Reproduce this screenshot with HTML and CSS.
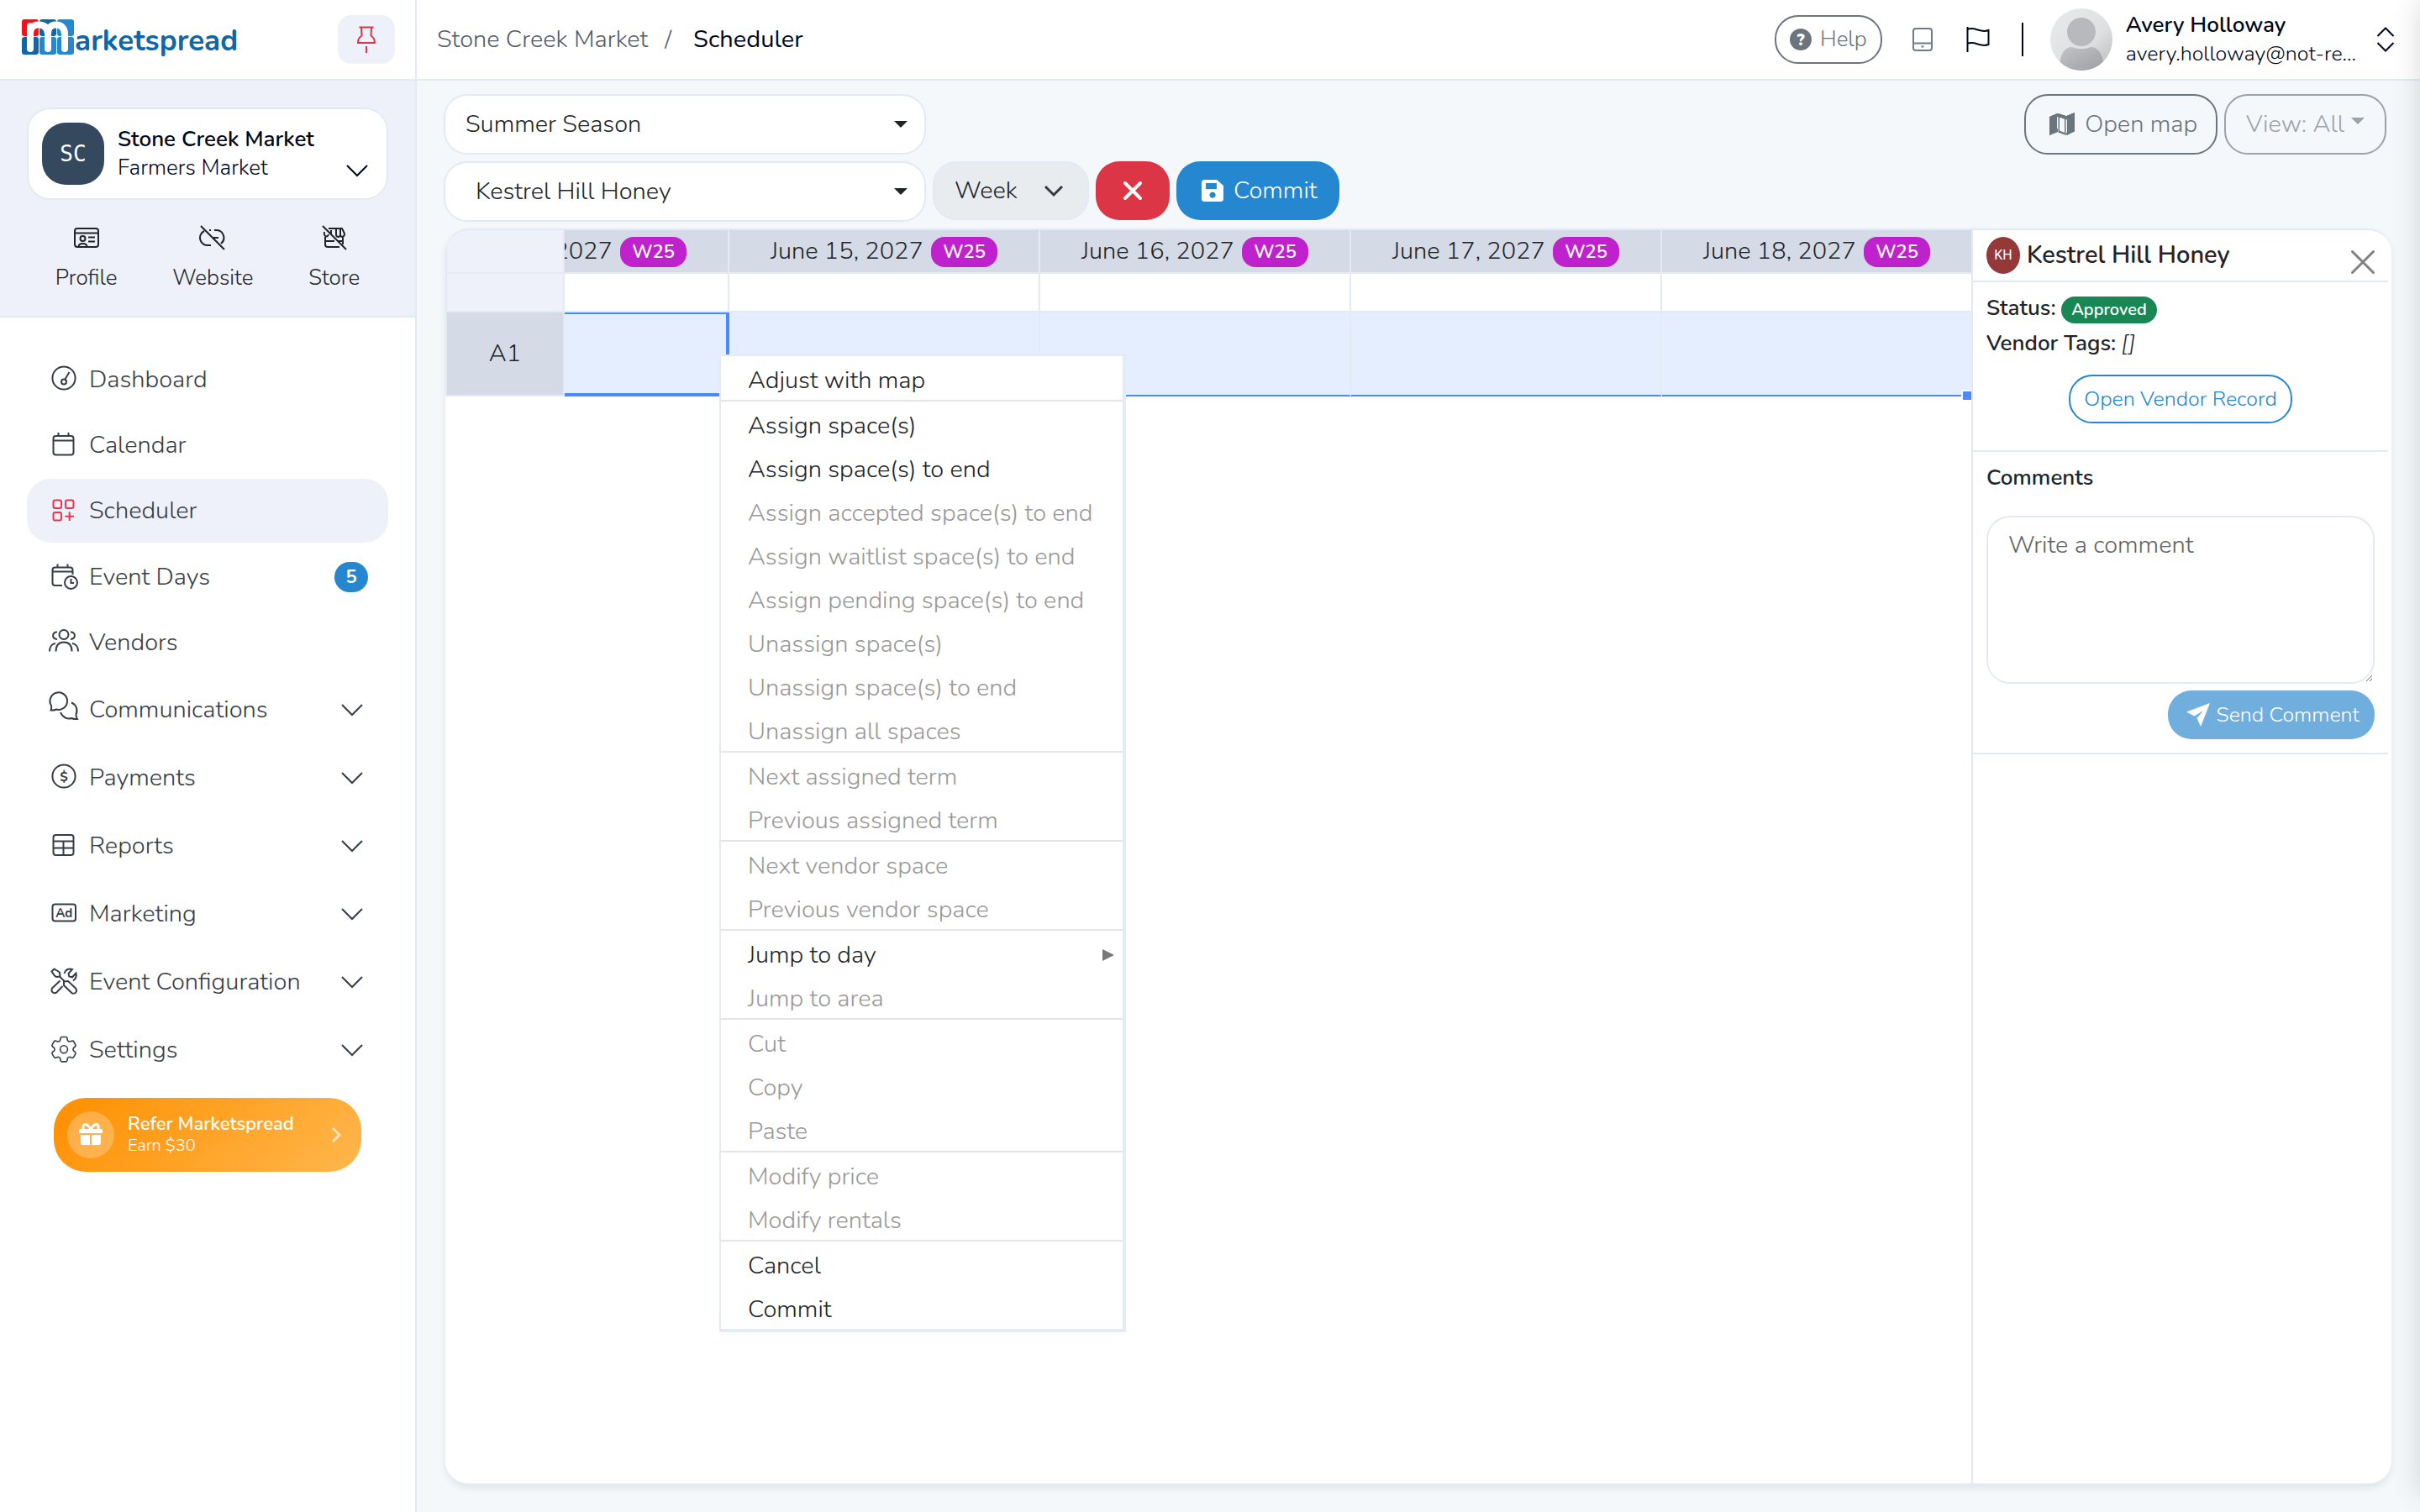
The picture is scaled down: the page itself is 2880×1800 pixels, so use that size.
FILE: index.html
```html
<!DOCTYPE html>
<html lang="en">
<head>
  <meta charset="utf-8">
  <title>Scheduler - Marketspread</title>
  <link rel="stylesheet" href="styles.css">
</head>
<body>
  <aside class="sidebar">
    <div class="brand-bar">
      <a class="brand" href="#">
        <svg class="brand-mark" width="62" height="42" viewBox="0 0 62 42" aria-hidden="true">
          <rect x="0" y="0" width="20" height="20" rx="3" fill="#fb0f14"/>
          <rect x="21" y="0" width="20" height="20" rx="3" fill="#0f67a6"/>
          <rect x="42" y="0" width="20" height="20" rx="3" fill="#2487d0"/>
          <rect x="0" y="21" width="20" height="21" rx="3" fill="#0f67a6"/>
          <rect x="21" y="21" width="20" height="21" rx="3" fill="#2487d0"/>
          <rect x="42" y="21" width="20" height="21" rx="3" fill="#2487d0"/>
          <path d="M10 8v27M10 17c0-7 4-10.500 9-10.500h1c7 0 10.500 3.500 11 10.500v18M31 17c0-7 4-10.500 9-10.500 8 0 11 4.500 11 11v17.500" fill="none" stroke="#fff" stroke-width="8" stroke-linecap="round"/>
        </svg>
        <span class="brand-text">arketspread</span>
      </a>
      <button class="pin-btn" aria-label="Pin menu">
        <svg width="24" height="32" viewBox="0 0 24 32"><path d="M3.500 1.500h17M6 1.500l.5 10c-2.500 1.500-4.500 4-4.500 8.500h20c0-4.500-2-7-4.500-8.500l.5-10M12 24v8"/></svg>
      </button>
    </div>

    <div class="market">
      <button class="market-card">
        <span class="market-avatar">SC</span>
        <span class="market-names">
          <span class="market-name">Stone Creek Market</span>
          <span class="market-type">Farmers Market</span>
        </span>
        <svg class="chevron" width="26" height="14" viewBox="0 0 26 14"><path d="M1 1l12 12L25 1"/></svg>
      </button>
      <div class="quick-links">
        <a href="#">
          <svg width="30" height="30" viewBox="0 0 30 30"><rect x="1" y="4" width="28" height="22" rx="3"/><path d="M1 9.500h28M17 14.500h8M17 19.500h8M5.500 26c0-3 2-4 5-4s5 1 5 4"/><circle cx="10.500" cy="16" r="3"/></svg>
          Profile
        </a>
        <a href="#">
          <svg width="30" height="30" viewBox="0 0 30 30"><path d="M1 1l28 28M5 7a9 9 0 0 0 5 17h3M13 6h-2M17 6h3a9 9 0 0 1 5 16M16 15h6"/></svg>
          Website
        </a>
        <a href="#">
          <svg width="30" height="30" viewBox="0 0 30 30"><path d="M1 1l28 28M8 4h16l3 6c0 5-5 5-5 1 0 4-5 4-5 0V4M22 4v8M11 6v5M3 8c-1 6 4 7 5 3M4 14v9q0 3 3 3h14M25 14v9M4 19h11M19 19h6"/></svg>
          Store
        </a>
      </div>
    </div>

    <nav class="nav">
      <a class="nav-item" href="#">
        <svg width="36" height="36" viewBox="0 0 36 36"><circle cx="18" cy="16" r="13.600"/><circle cx="18" cy="20.500" r="3"/><path d="M19.500 17.500l5-8.500"/></svg>
        Dashboard
      </a>
      <a class="nav-item" href="#">
        <svg width="36" height="36" viewBox="0 0 36 36"><rect x="5.500" y="7" width="24" height="22.500" rx="3"/><path d="M5.500 12.500h24M11.500 3v4M23.500 3v4"/></svg>
        Calendar
      </a>
      <a class="nav-item active" href="#">
        <svg width="36" height="36" viewBox="0 0 36 36"><rect x="5.500" y="5.500" width="9.500" height="9.500" rx="2"/><rect x="20" y="5.500" width="9.500" height="9.500" rx="2"/><rect x="5.500" y="20" width="9.500" height="9.500" rx="2"/><path d="M24.700 19.500v10.500M19.500 24.700h10.500"/></svg>
        Scheduler
      </a>
      <a class="nav-item with-badge" href="#">
        <svg width="36" height="36" viewBox="0 0 36 36"><path d="M28.500 15V9.500q0-3-3-3h-18q-3 0-3 3v15.500q0 3 3 3h8.500M4.500 11.500h24M10.500 2.500v4M22.500 2.500v4"/><circle cx="26.500" cy="24.500" r="7.500"/><path d="M26.500 20v5h3.500"/></svg>
        Event Days
        <span class="count-badge">5</span>
      </a>
      <a class="nav-item" href="#">
        <svg width="36" height="36" viewBox="0 0 36 36"><circle cx="18" cy="8.500" r="5.500"/><path d="M8.500 28.500c0-6.500 3-11 9.500-11s9.500 4.500 9.500 11M10 5.500c-6-1-7 8.500 0 8.500M26 5.500c6-1 7 8.500 0 8.500M1 28.500c0-5 2.500-9 7-9.500M35 28.500c0-5-2.500-9-7-9.500"/></svg>
        Vendors
      </a>
      <button class="nav-item toggle">
        <svg width="36" height="36" viewBox="0 0 36 36"><path d="M2.500 18.500c1-2 1-3.500.5-5.500A10.300 10.300 0 1 1 9 17.500c-2 1-4 1.300-6.500 1zM27 9.500a10.200 10.200 0 0 1 5.500 14c-.3 2 .2 3.500 1.500 5.500-2.500.3-4.500 0-6.500-1-5 1.500-11-.5-13.500-7"/></svg>
        Communications
        <svg class="chevron" width="26" height="14" viewBox="0 0 26 14"><path d="M1 1l12 12L25 1"/></svg>
      </button>
      <button class="nav-item toggle">
        <svg width="36" height="36" viewBox="0 0 36 36"><circle cx="18" cy="16" r="13.600"/><text x="18" y="21.500" font-size="16" text-anchor="middle">$</text></svg>
        Payments
        <svg class="chevron" width="26" height="14" viewBox="0 0 26 14"><path d="M1 1l12 12L25 1"/></svg>
      </button>
      <button class="nav-item toggle">
        <svg width="36" height="36" viewBox="0 0 36 36"><rect x="5.500" y="5" width="24" height="24" rx="3"/><path d="M5.500 12.500h24M5.500 20.500h24M17.500 12.500V29"/></svg>
        Reports
        <svg class="chevron" width="26" height="14" viewBox="0 0 26 14"><path d="M1 1l12 12L25 1"/></svg>
      </button>
      <button class="nav-item toggle">
        <svg width="36" height="36" viewBox="0 0 36 36"><rect x="4.500" y="6.500" width="27.500" height="20" rx="3"/><text x="18.300" y="22" font-size="15" text-anchor="middle">Ad</text></svg>
        Marketing
        <svg class="chevron" width="26" height="14" viewBox="0 0 26 14"><path d="M1 1l12 12L25 1"/></svg>
      </button>
      <button class="nav-item toggle">
        <svg width="36" height="36" viewBox="0 0 36 36"><path d="M3.500 5.500l3-3L13 6.500l.5 5-4.500.5-2-1.500zM12.500 11l6 6M18 17.500l5-.5 9 8.500a3.600 3.600 0 0 1-5 5.200l-9-8.700zM18.500 8c1-4.500 5-6.500 9.500-5l-4.500 5 .8 3.500 3.700.8L32.500 7.500c1 4-.5 7-3.500 9M13.500 16.500L4.500 25a3.600 3.600 0 0 0 5 5.200l7-7.200"/></svg>
        Event Configuration
        <svg class="chevron" width="26" height="14" viewBox="0 0 26 14"><path d="M1 1l12 12L25 1"/></svg>
      </button>
      <button class="nav-item toggle">
        <svg class="gear" width="36" height="36" viewBox="1 1.500 22 22"><path d="M9.594 3.940c.09-.542.56-.94 1.110-.94h2.593c.55 0 1.020.398 1.110.94l.213 1.281c.063.374.313.686.645.87.074.04.147.083.22.127.325.196.72.257 1.075.124l1.217-.456a1.125 1.125 0 0 1 1.370.49l1.296 2.247a1.125 1.125 0 0 1-.26 1.431l-1.003.827c-.293.241-.438.613-.43.992a7.723 7.723 0 0 1 0 .255c-.008.378.137.75.43.991l1.004.827c.424.35.534.955.26 1.430l-1.298 2.247a1.125 1.125 0 0 1-1.369.491l-1.217-.456c-.355-.133-.75-.072-1.076.124a6.470 6.470 0 0 1-.22.128c-.331.183-.581.495-.644.869l-.213 1.281c-.09.543-.56.94-1.110.94h-2.594c-.55 0-1.019-.398-1.110-.94l-.213-1.281c-.062-.374-.312-.686-.644-.87a6.520 6.520 0 0 1-.22-.127c-.325-.196-.72-.257-1.076-.124l-1.217.456a1.125 1.125 0 0 1-1.369-.49l-1.297-2.247a1.125 1.125 0 0 1 .26-1.431l1.004-.827c.292-.24.437-.613.43-.991a6.932 6.932 0 0 1 0-.255c.007-.38-.138-.751-.43-.992l-1.004-.827a1.125 1.125 0 0 1-.26-1.430l1.297-2.247a1.125 1.125 0 0 1 1.370-.491l1.216.456c.356.133.751.072 1.076-.124.072-.044.146-.086.22-.128.332-.183.582-.495.644-.869l.214-1.280Z"/><circle cx="12" cy="12" r="2.700"/></svg>
        Settings
        <svg class="chevron" width="26" height="14" viewBox="0 0 26 14"><path d="M1 1l12 12L25 1"/></svg>
      </button>
    </nav>

    <a class="refer" href="#">
      <span class="refer-icon">
        <svg width="28" height="28" viewBox="0 0 28 28"><path d="M2 14h11v12H4.500q-2.500 0-2.500-2.500zM15 14h11v9.500q0 2.500-2.500 2.500H15zM1.500 7h25q1.500 0 1.500 1.500v3.500H0V8.500Q0 7 1.500 7z" fill="#fff"/><path d="M14 8C12 3.500 10 1.500 7.500 1.500S4.500 5 5 7.500M14 8c2-4.500 4-6.500 6.500-6.500s3 3.500 2.500 6" fill="none" stroke="#fff" stroke-width="3"/></svg>
      </span>
      <span class="refer-text">
        <strong>Refer Marketspread</strong>
        <span>Earn $30</span>
      </span>
      <svg class="refer-arrow" width="12" height="20" viewBox="0 0 12 20"><path d="M2 2l8 8-8 8"/></svg>
    </a>
  </aside>

  <div class="page">
    <header class="topbar">
      <nav class="breadcrumb">
        <a href="#">Stone Creek Market</a>
        <span class="slash">/</span>
        <span class="current">Scheduler</span>
      </nav>
      <div class="topbar-right">
        <button class="help-btn">
          <svg width="26" height="26" viewBox="0 0 26 26"><circle cx="13" cy="13" r="13" fill="#6c757d"/><text x="13" y="20" font-size="19" font-weight="900" text-anchor="middle" fill="#fff">?</text></svg>
          Help
        </button>
        <svg class="device" width="24" height="28" viewBox="0 0 24 28"><rect x="1" y="1" width="22" height="26" rx="3"/><path d="M1 18.500h22M10.500 22.500h3"/></svg>
        <svg class="flag" width="28" height="30" viewBox="0 0 28 30"><path d="M1.500 0v30M1.500 3c9-4 15 5 25 1v17c-10 4-16-5-25-1"/></svg>
        <span class="divider"></span>
        <button class="user">
          <svg width="74" height="74" viewBox="0 0 74 74">
            <defs>
              <linearGradient id="ring" x1="0" y1="0" x2="1" y2="1"><stop offset="0" stop-color="#e9eaeb"/><stop offset=".6" stop-color="#dfe0e1"/><stop offset="1" stop-color="#b9babc"/></linearGradient>
              <linearGradient id="bust" x1="0" y1="0" x2="1" y2="1"><stop offset="0" stop-color="#c3c4c7"/><stop offset="1" stop-color="#9d9ea1"/></linearGradient>
              <clipPath id="round"><circle cx="37" cy="37" r="37"/></clipPath>
            </defs>
            <circle cx="37" cy="37" r="37" fill="url(#ring)"/>
            <path clip-path="url(#round)" d="M11 74c0-16 4-28 15-28 7 3 15 3 22 0 11 0 16 12 16 28z" fill="url(#bust)"/>
            <circle cx="37" cy="28" r="17" fill="#b8b9bc"/>
          </svg>
          <span class="user-text">
            <strong>Avery Holloway</strong>
            <span>avery.holloway@not-re...</span>
          </span>
          <svg class="updown" width="22" height="30" viewBox="0 0 22 30"><path d="M1.500 11L11 1.500 20.500 11M1.500 19l9.500 9.500L20.500 19"/></svg>
        </button>
      </div>
    </header>

    <main class="content">
      <div class="toolbar">
        <div class="toolbar-row">
          <div class="select-wrap wide">
            <select aria-label="Season"><option>Summer Season</option></select>
            <svg class="caret" width="16" height="8" viewBox="0 0 16 8"><path d="M0 0h16L8 8z"/></svg>
          </div>
          <div class="toolbar-end">
            <button class="btn outline">
              <svg width="30" height="28" viewBox="0 0 30 28"><path d="M0 5l9-4v22l-9 4zM10.500 1l9 3v23l-9-3.500zM21 4l9-4v22l-9 5z" fill="#6c757d"/><path d="M12 4l6 2v18l-6-2.500z" fill="#f4f8fb"/><path d="M0 5l10-4 10 3 10-4v4l-10 4.500L10 5 0 8zM0 23l10-4v4L0 27zM20 24l10-4v2.500L20 27z" fill="#6c757d"/></svg>
              Open map
            </button>
            <button class="btn outline faded">
              View: All
              <svg class="view-caret" width="16" height="8" viewBox="0 0 16 8"><path d="M0 0h16L8 8z"/></svg>
            </button>
          </div>
        </div>
        <div class="toolbar-row">
          <div class="select-wrap wide indent">
            <select aria-label="Vendor"><option>Kestrel Hill Honey</option></select>
            <svg class="caret" width="16" height="8" viewBox="0 0 16 8"><path d="M0 0h16L8 8z"/></svg>
          </div>
          <div class="select-wrap week">
            <select aria-label="View range"><option>Week</option></select>
            <svg class="caret line" width="24" height="14" viewBox="0 0 24 14"><path d="M2 2l10 10L22 2"/></svg>
          </div>
          <button class="btn danger" aria-label="Discard">
            <svg width="22" height="22" viewBox="0 0 22 22"><path d="M2 2l18 18M20 2L2 20" stroke="#fff" stroke-width="4" stroke-linecap="round"/></svg>
          </button>
          <button class="btn primary">
            <svg width="26" height="26" viewBox="0 0 26 26"><path fill-rule="evenodd" d="M3.500 0H18l8 7v15.500q0 3.500-3.500 3.500h-19Q0 26 0 22.500v-19Q0 0 3.500 0zM5 4v7h13V4zM13 14.500a3.600 3.600 0 1 0 .1 0z" fill="#fff"/></svg>
            Commit
          </button>
        </div>
      </div>

      <section class="board">
        <div class="grid">
          <table class="schedule">
            <thead>
              <tr>
                <th class="corner"></th>
                <th>June 14, 2027 <span class="week-badge">W25</span></th>
                <th>June 15, 2027 <span class="week-badge">W25</span></th>
                <th>June 16, 2027 <span class="week-badge">W25</span></th>
                <th>June 17, 2027 <span class="week-badge">W25</span></th>
                <th>June 18, 2027 <span class="week-badge">W25</span></th>
              </tr>
            </thead>
            <tbody>
              <tr class="spacer"><th class="corner"></th><td></td><td></td><td></td><td></td><td></td></tr>
              <tr class="selected">
                <th scope="row">A1</th>
                <td class="current-cell"></td><td></td><td></td><td></td>
                <td><span class="fill-handle"></span></td>
              </tr>
            </tbody>
          </table>
        </div>

        <aside class="details">
          <div class="details-head">
            <span class="vendor-avatar">KH</span>
            <h2>Kestrel Hill Honey</h2>
            <button class="close-btn" aria-label="Close">
              <svg width="28" height="28" viewBox="0 0 28 28"><path d="M1.500 1.500l25 25M26.500 1.500l-25 25"/></svg>
            </button>
          </div>
          <div class="details-section status">
            <p><strong>Status:</strong> <span class="status-badge">Approved</span></p>
            <p><strong>Vendor Tags:</strong> <em>[]</em></p>
            <button class="small-btn">Open Vendor Record</button>
          </div>
          <div class="details-section comments">
            <label for="comment">Comments</label>
            <textarea id="comment" placeholder="Write a comment"></textarea>
            <button class="small-btn send">
              <svg width="28" height="28" viewBox="0 0 28 28"><path d="M28 0L0 10.500l9.500 5L20 9 12.500 18l4.500 10z" fill="#fff"/></svg>
              Send Comment
            </button>
          </div>
        </aside>

        <ul class="context-menu">
          <li><button>Adjust with map</button></li>
          <li class="sep"><button>Assign space(s)</button></li>
          <li><button>Assign space(s) to end</button></li>
          <li><button disabled>Assign accepted space(s) to end</button></li>
          <li><button disabled>Assign waitlist space(s) to end</button></li>
          <li><button disabled>Assign pending space(s) to end</button></li>
          <li><button disabled>Unassign space(s)</button></li>
          <li><button disabled>Unassign space(s) to end</button></li>
          <li><button disabled>Unassign all spaces</button></li>
          <li class="sep"><button disabled>Next assigned term</button></li>
          <li><button disabled>Previous assigned term</button></li>
          <li class="sep"><button disabled>Next vendor space</button></li>
          <li><button disabled>Previous vendor space</button></li>
          <li class="sep"><button>Jump to day <svg width="14" height="14" viewBox="0 0 14 14"><path d="M0 0l14 7-14 7z" fill="#777"/></svg></button></li>
          <li><button disabled>Jump to area</button></li>
          <li class="sep"><button disabled>Cut</button></li>
          <li><button disabled>Copy</button></li>
          <li><button disabled>Paste</button></li>
          <li class="sep"><button disabled>Modify price</button></li>
          <li><button disabled>Modify rentals</button></li>
          <li class="sep"><button>Cancel</button></li>
          <li><button>Commit</button></li>
        </ul>
      </section>
    </main>
  </div>

  <div class="drawer"></div>
</body>
</html>
```
FILE: styles.css
```css
:root {
  --border: #e4eaf5;
  --soft-bg: #eef1f9;
  --page-bg: #f4f8fb;
  --head-bg: #d4dae6;
  --text: #212529;
  --ink: #00081d;
  --nav-text: #363d47;
  --muted: #6c757d;
  --primary: #2487d0;
  --danger: #dc3545;
  --select-blue: #4b89ff;
}

* {
  box-sizing: border-box;
}

body {
  margin: 0;
  display: flex;
  height: 100vh;
  overflow: hidden;
  font-family: Nunito, "Open Sans", sans-serif;
  font-weight: 300;
  font-size: 29px;
  line-height: 42px;
  color: var(--text);
  background: var(--page-bg);
}

button, select, textarea {
  font: inherit;
  color: inherit;
}

button {
  padding: 0;
  border: 0;
  background: none;
  cursor: pointer;
}

a {
  color: inherit;
  text-decoration: none;
}

svg {
  flex-shrink: 0;
  overflow: visible;
}

strong {
  font-weight: 600;
}

/* Sidebar */
.sidebar {
  flex: 0 0 496px;
  background: #fff;
  border-right: 2px solid var(--border);
}

.brand-bar {
  display: flex;
  align-items: center;
  justify-content: space-between;
  height: 96px;
  padding: 0 24px 0 26px;
  border-bottom: 2px solid var(--border);
}

.brand {
  display: flex;
  align-items: center;
  gap: 1px;
}

.brand-mark {
  margin-bottom: 6px;
}

.brand-text {
  margin-top: 4px;
  font-size: 35px;
  font-weight: 700;
  color: #0f67a6;
}

.pin-btn {
  display: flex;
  align-items: center;
  justify-content: center;
  width: 68px;
  height: 58px;
  border-radius: 16px;
  background: var(--soft-bg);
}

.pin-btn svg {
  fill: none;
  stroke: var(--danger);
  stroke-width: 2;
}

.market {
  padding: 32px 32px 24px;
  background: var(--soft-bg);
  border-bottom: 2px solid var(--border);
}

.market-card {
  display: flex;
  align-items: center;
  width: 100%;
  height: 110px;
  padding: 0 22px 0 16px;
  background: #fff;
  border: 2px solid var(--border);
  border-radius: 28px;
  text-align: left;
  color: var(--ink);
}

.market-avatar {
  display: flex;
  align-items: center;
  justify-content: center;
  width: 74px;
  height: 74px;
  margin-right: 16px;
  border-radius: 28px;
  background: #34495e;
  color: #fff;
  font-family: "DejaVu Sans Mono", monospace;
  font-size: 26px;
}

.market-names {
  display: flex;
  flex-direction: column;
  flex: 1;
  font-size: 26px;
  line-height: 34px;
}

.market-name {
  font-weight: 600;
}

.market-card .chevron {
  align-self: flex-end;
  margin-bottom: 26px;
}

.chevron {
  fill: none;
  stroke: currentColor;
  stroke-width: 2;
}

.quick-links {
  display: flex;
  justify-content: space-evenly;
  margin: 0 -32px;
  padding-top: 30px;
}

.quick-links a {
  display: flex;
  flex-direction: column;
  align-items: center;
  gap: 12px;
  font-size: 26px;
}

.quick-links svg,
.nav-item svg {
  fill: none;
  stroke: currentColor;
  stroke-width: 2;
}

.nav {
  display: flex;
  flex-direction: column;
  gap: 2px;
  padding: 36px 32px 0;
}

.nav-item {
  display: flex;
  align-items: center;
  gap: 12px;
  height: 76px;
  padding: 0 26px;
  border-radius: 28px;
  color: var(--nav-text);
  text-align: left;
}

.nav-item text {
  fill: currentColor;
  stroke: none;
  font-weight: 700;
}

.nav-item.active {
  background: var(--soft-bg);
}

.nav-item.active svg {
  stroke: #e8354a;
}

.nav-item.with-badge {
  height: 77px;
}

.nav-item.toggle {
  height: 79px;
}

.nav-item .gear {
  stroke-width: 1;
}

.nav-item .chevron {
  margin-left: auto;
  margin-right: 4px;
}

.count-badge {
  margin-left: auto;
  margin-right: -2px;
  width: 40px;
  border-radius: 18px;
  background: var(--primary);
  color: #fff;
  font-size: 22px;
  font-weight: 700;
  line-height: 36px;
  text-align: center;
}

.refer {
  display: flex;
  align-items: center;
  height: 88px;
  margin: 18px 64px 0;
  padding: 0 24px 0 16px;
  border-radius: 38px;
  background: linear-gradient(135deg, #ff8f00, #ffb74d);
  color: #fff;
}

.refer-icon {
  display: flex;
  align-items: center;
  justify-content: center;
  width: 56px;
  height: 56px;
  margin-right: 16px;
  border-radius: 50%;
  background: rgba(255, 255, 255, 0.25);
}

.refer-text {
  display: flex;
  flex-direction: column;
  flex: 1;
  font-size: 20px;
  line-height: 26px;
}

.refer-text strong {
  font-size: 22px;
}

.refer-arrow {
  fill: none;
  stroke: #ffe3bd;
  stroke-width: 3;
}

/* Top bar */
.page {
  display: flex;
  flex-direction: column;
  flex: 1;
  min-width: 0;
}

.topbar {
  display: flex;
  align-items: center;
  justify-content: space-between;
  flex: 0 0 96px;
  padding: 0 30px 0 24px;
  background: #fff;
  border-bottom: 2px solid var(--border);
}

.breadcrumb {
  display: flex;
  color: #555c66;
}

.slash {
  margin: 0 26px 0 20px;
}

.breadcrumb .current {
  color: var(--ink);
  font-weight: 400;
}

.topbar-right {
  display: flex;
  align-items: center;
}

.help-btn {
  display: flex;
  align-items: center;
  gap: 10px;
  height: 58px;
  padding: 0 16px;
  border: 2px solid var(--muted);
  border-radius: 28px;
  color: var(--muted);
  font-size: 26px;
}

.device {
  margin: 0 40px 0 36px;
  fill: none;
  stroke: #6f7a88;
  stroke-width: 2;
}

.flag {
  fill: none;
  stroke: var(--ink);
  stroke-width: 2;
}

.divider {
  width: 2px;
  height: 40px;
  margin: 0 32px 0 38px;
  background: var(--ink);
}

.user {
  display: flex;
  align-items: center;
  gap: 16px;
  color: var(--ink);
  text-align: left;
}

.user-text {
  display: flex;
  flex-direction: column;
  font-size: 25px;
  line-height: 34px;
}

.user-text strong {
  font-size: 26px;
}

.updown {
  margin-left: 8px;
  fill: none;
  stroke: currentColor;
  stroke-width: 2;
}

/* Toolbar */
.content {
  display: flex;
  flex-direction: column;
  flex: 1;
  min-height: 0;
  padding: 16px 34px 32px;
}

.toolbar {
  display: flex;
  flex-direction: column;
  gap: 8px;
  margin: 0 6px 8px -2px;
}

.toolbar-row {
  display: flex;
  align-items: flex-start;
  gap: 8px;
}

.toolbar-end {
  display: flex;
  gap: 8px;
  margin-left: auto;
}

.select-wrap {
  position: relative;
}

.select-wrap select {
  appearance: none;
  width: 100%;
  height: 72px;
  padding: 0 24px;
  border: 2px solid var(--border);
  border-radius: 28px;
  background: #fff;
}

.select-wrap.wide {
  width: 574px;
}

.select-wrap.indent select {
  padding-left: 36px;
}

.select-wrap.week {
  width: 186px;
}

.select-wrap.week select {
  height: 70px;
  background: #e9ecef;
}

.caret {
  position: absolute;
  right: 22px;
  top: 32px;
  fill: var(--text);
  pointer-events: none;
}

.caret.line {
  right: 30px;
  top: 28px;
  fill: none;
  stroke: #343a40;
  stroke-width: 3;
}

.btn {
  display: flex;
  align-items: center;
  justify-content: center;
  gap: 12px;
  height: 70px;
  padding: 0 26px 0 30px;
  border-radius: 28px;
  color: #fff;
}

.btn.danger {
  width: 88px;
  padding: 0;
  background: var(--danger);
}

.btn.primary {
  background: var(--primary);
}

.btn.outline {
  height: 72px;
  padding: 0 22px 0 28px;
  border: 2px solid var(--muted);
  color: var(--muted);
}

.btn.outline.faded {
  gap: 8px;
  padding: 0 24px;
  opacity: 0.65;
}

.view-caret {
  margin-bottom: 8px;
  fill: currentColor;
}

/* Schedule board */
.board {
  position: relative;
  display: flex;
  flex: 1;
  min-height: 0;
  overflow: hidden;
  background: #fff;
  border-top: 2px solid var(--border);
  border-bottom: 2px solid var(--border);
  border-radius: 28px;
  box-shadow: 0 4px 8px rgba(0, 0, 0, 0.075);
}

/* scrolled to the newest day, row headers stay in view */
.grid {
  display: flex;
  justify-content: flex-end;
  align-items: flex-start;
  flex: 1;
  min-width: 0;
  overflow: hidden;
}

.schedule {
  flex-shrink: 0;
  width: 1990px;
  table-layout: fixed;
  border-collapse: separate;
  border-spacing: 0;
}

.schedule th,
.schedule td {
  position: relative;
  padding: 0;
  border-right: 2px solid var(--border);
  border-bottom: 2px solid var(--border);
  font-weight: 300;
  text-align: center;
  vertical-align: middle;
}

.schedule thead th {
  width: 370px;
  height: 52px;
  background: var(--head-bg);
  white-space: nowrap;
}

.schedule tr > :last-child {
  width: 368px;
  border-right: 0;
}

.schedule tr > :first-child {
  position: sticky;
  left: 0;
  z-index: 1;
  width: 142px;
  border-left: 2px solid var(--border);
  background: var(--head-bg);
}

.schedule tr > .corner {
  background: var(--soft-bg);
}

.spacer td {
  height: 46px;
}

.selected td {
  height: 100px;
  background: #e5eefe;
  border-bottom-color: var(--select-blue);
}

.selected .current-cell {
  border-right-color: var(--select-blue);
  box-shadow: inset -2px -2px 0 var(--select-blue), inset 0 2px 0 var(--select-blue);
}

.week-badge {
  display: inline-block;
  margin-left: 2px;
  padding: 0 14px;
  border-radius: 16px;
  background: #bf22cc;
  color: #fff;
  font-size: 22px;
  font-weight: 600;
  line-height: 36px;
  vertical-align: 1px;
}

.fill-handle {
  position: absolute;
  right: 0;
  bottom: -8px;
  width: 12px;
  height: 14px;
  border: 2px solid #fff;
  border-right: 0;
  background: var(--select-blue);
}

/* Vendor details */
.details {
  flex: 0 0 500px;
  padding-right: 4px;
  border-left: 2px solid var(--border);
}

.details-head {
  display: flex;
  align-items: center;
  height: 62px;
  padding: 0 16px;
  border-bottom: 2px solid var(--border);
}

.vendor-avatar {
  width: 40px;
  margin-right: 8px;
  border-radius: 50%;
  background: #943838;
  color: #fff;
  font-family: Roboto, sans-serif;
  font-size: 16px;
  font-weight: 400;
  line-height: 44px;
  text-align: center;
}

.details-head h2 {
  flex: 1;
  margin: 0;
  font-size: 29px;
  font-weight: 600;
}

.close-btn {
  display: flex;
  padding-top: 16px;
}

.close-btn svg {
  stroke: #808080;
  stroke-width: 3;
  stroke-linecap: round;
}

.details-section {
  display: flex;
  flex-direction: column;
  padding: 10px 16px 16px;
  border-bottom: 2px solid var(--border);
  font-size: 26px;
}

.details-section p {
  margin: 0;
}

.details-section.status {
  padding-bottom: 32px;
}

.status-badge {
  display: inline-block;
  padding: 0 12px;
  border-radius: 16px;
  background: #198754;
  color: #fff;
  font-size: 20px;
  font-weight: 600;
  line-height: 32px;
}

.small-btn {
  display: flex;
  align-items: center;
  align-self: center;
  gap: 8px;
  height: 58px;
  margin-top: 16px;
  padding: 0 16px;
  border: 2px solid var(--primary);
  border-radius: 28px;
  color: var(--primary);
  font-size: 25px;
}

.comments label {
  font-weight: 600;
}

.comments textarea {
  height: 200px;
  margin-top: 24px;
  padding: 12px 24px;
  border: 2px solid var(--border);
  border-radius: 28px;
  font-size: 29px;
  resize: vertical;
}

.comments textarea::placeholder {
  color: #5f6468;
}

.small-btn.send {
  align-self: flex-end;
  margin-top: 8px;
  padding: 0 18px 0 22px;
  border: 0;
  background: #70aede;
  color: #fff;
}

/* Context menu */
.context-menu {
  position: absolute;
  left: 326px;
  top: 148px;
  z-index: 2;
  width: 484px;
  margin: 0;
  padding: 0;
  list-style: none;
  background: #fff;
  border: 2px solid #e4ebf5;
  border-right-width: 4px;
  border-bottom-width: 4px;
}

.context-menu .sep {
  border-top: 2px solid #e6e6e6;
}

.context-menu button {
  display: flex;
  align-items: center;
  justify-content: space-between;
  width: 100%;
  height: 52px;
  padding: 6px 10px 0 32px;
}

.context-menu button:disabled {
  color: #999;
}

/* off-canvas drawer parked past the right edge */
.drawer {
  position: fixed;
  left: 100%;
  top: 0;
  bottom: 20px;
  width: 400px;
  box-shadow: 0 0 32px rgba(0, 0, 0, 0.15);
}
```
